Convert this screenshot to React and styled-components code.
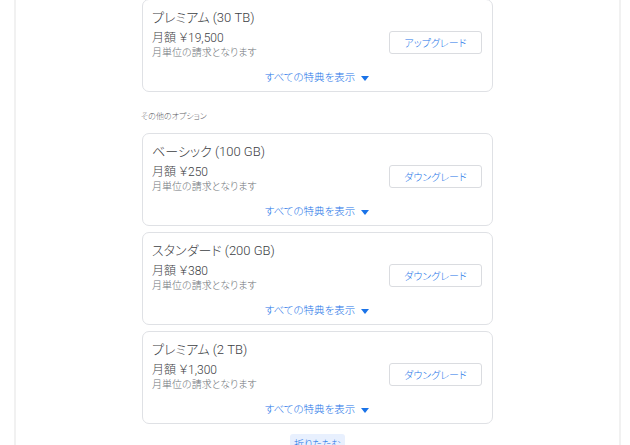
import React from 'react'
import styled, { createGlobalStyle } from 'styled-components'

const GlobalStyle = createGlobalStyle`
  html, body {
    margin: 0;
    padding: 0;
    background: #fff;
    font-family: Roboto, "Noto Sans CJK JP", sans-serif;
    font-feature-settings: "palt";
  }
`

const plans = [
  { name: 'ベーシック (100 GB)', price: '月額 ￥250' },
  { name: 'スタンダード (200 GB)', price: '月額 ￥380' },
  { name: 'プレミアム (2 TB)', price: '月額 ￥1,300' },
]

function Caret() {
  return (
    <svg width="8" height="5" viewBox="0 0 8 5">
      <path d="M0 0h8L4 5z" fill="#1a73e8" />
    </svg>
  )
}

function PlanCard({ name, price, action }) {
  return (
    <Card>
      <Title>{name}</Title>
      <Row>
        <PriceBlock>
          <Price>{price}</Price>
          <Billing>月単位の請求となります</Billing>
        </PriceBlock>
        <ActionButton>{action}</ActionButton>
      </Row>
      <Benefits>
        すべての特典を表示
        <Caret />
      </Benefits>
    </Card>
  )
}

export default function App() {
  return (
    <>
      <GlobalStyle />
      <Page>
        <Panel>
          <Column>
            <PlanCard name="プレミアム (30 TB)" price="月額 ￥19,500" action="アップグレード" />
            <SectionLabel>その他のオプション</SectionLabel>
            <CardList>
              {plans.map((p) => (
                <PlanCard key={p.name} name={p.name} price={p.price} action="ダウングレード" />
              ))}
            </CardList>
            <CollapseButton>折りたたむ</CollapseButton>
          </Column>
        </Panel>
      </Page>
    </>
  )
}

const Page = styled.div`
  height: 445px;
  overflow: hidden;
  padding: 0 9px 0 14px;
  box-sizing: border-box;
`

const Panel = styled.div`
  height: 100%;
  border-left: 2px solid #f1f1f1;
  border-right: 2px solid #f1f1f1;
  display: flex;
  justify-content: center;
`

const Column = styled.div`
  width: 351px;
  margin-top: -1px;
  display: flex;
  flex-direction: column;
  align-items: stretch;
`

const Card = styled.div`
  flex-shrink: 0;
  border: 1px solid #dfe1e5;
  border-radius: 7px;
  padding: 9px 10px 0 9px;
  height: 93px;
  box-sizing: border-box;
  display: flex;
  flex-direction: column;
`

const Title = styled.div`
  font-size: 13px;
  font-weight: 300;
  color: #3c4043;
  line-height: 18px;
`

const Row = styled.div`
  display: flex;
  align-items: center;
  justify-content: space-between;
  margin-top: 3px;
`

const PriceBlock = styled.div`
  display: flex;
  flex-direction: column;
`

const Price = styled.div`
  font-size: 12px;
  font-weight: 300;
  color: #3c4043;
  line-height: 16px;
`

const Billing = styled.div`
  font-size: 10px;
  font-weight: 300;
  color: #70757a;
  line-height: 14px;
`

const ActionButton = styled.button`
  flex-shrink: 0;
  width: 93px;
  height: 23px;
  border: 1px solid #dadce0;
  border-radius: 3px;
  background: #fff;
  color: #1a73e8;
  font-family: inherit;
  font-feature-settings: "palt";
  font-size: 10px;
  font-weight: 300;
  padding: 0;
  margin-bottom: 5px;
`

const Benefits = styled.div`
  display: flex;
  align-items: center;
  justify-content: center;
  gap: 6px;
  margin-top: 10px;
  font-size: 10.5px;
  font-weight: 300;
  color: #1a73e8;
  line-height: 16px;
`

const SectionLabel = styled.div`
  flex-shrink: 0;
  font-size: 8px;
  font-weight: 300;
  color: #5f6368;
  margin: 20px 0 11px -1px;
  line-height: 10px;
`

const CardList = styled.div`
  flex-shrink: 0;
  display: flex;
  flex-direction: column;
  gap: 6px;
`

const CollapseButton = styled.button`
  flex-shrink: 0;
  align-self: center;
  margin-top: 10px;
  width: 55px;
  border: none;
  border-radius: 3px;
  background: #e8f0fe;
  color: #1a73e8;
  font-family: inherit;
  font-feature-settings: "palt";
  font-size: 10px;
  font-weight: 300;
  line-height: 14px;
  padding: 4px 0 6px;
`
